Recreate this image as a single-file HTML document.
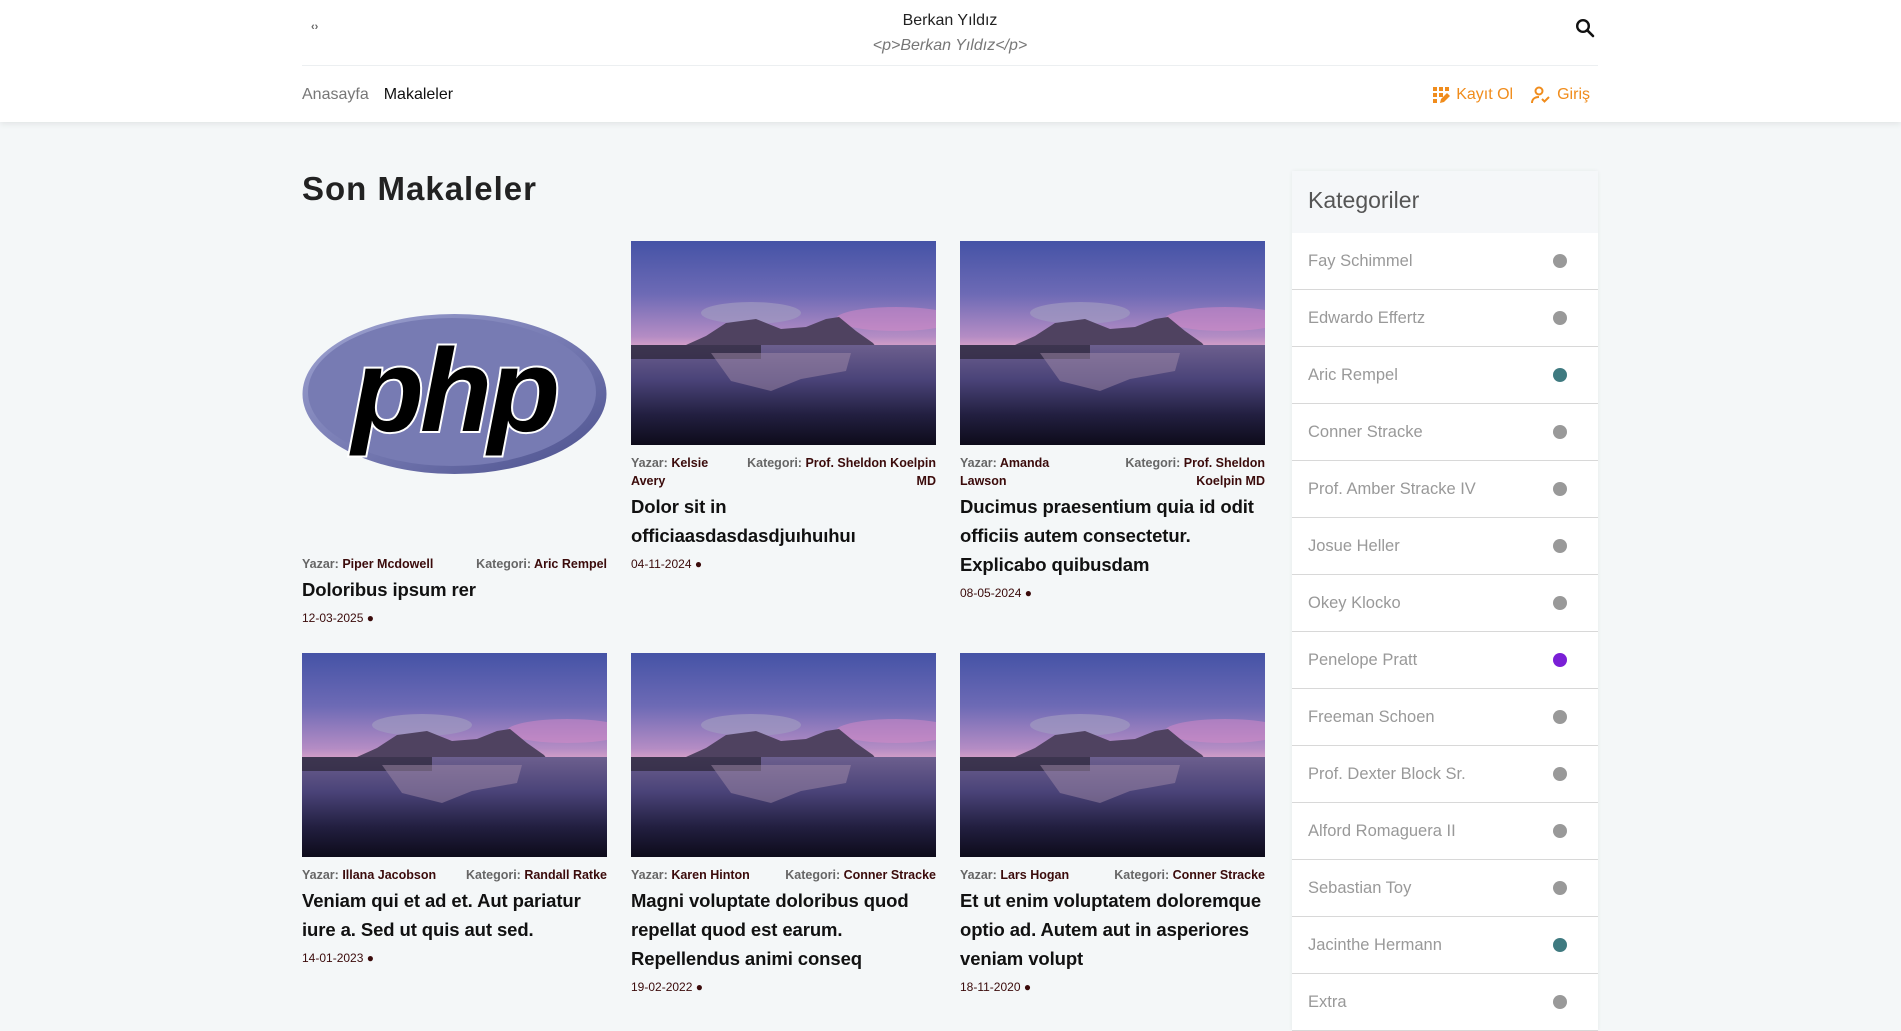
<!DOCTYPE html>
<html><head><meta charset="utf-8">
<style>
*{margin:0;padding:0;box-sizing:border-box}
body{width:1901px;height:989px;overflow:hidden;background:#f4f7f8;font-family:"Liberation Sans",sans-serif;position:relative}
.hdr{position:absolute;left:0;top:0;width:1901px;height:122px;background:#fff;box-shadow:0 2px 6px rgba(0,0,0,.08)}
.top{position:absolute;left:302px;top:0;width:1296px;height:66px;border-bottom:1px solid #eceff1}
.brand{position:absolute;left:0;width:100%;text-align:center;top:12px;font-size:16px;color:#222;line-height:18px}
.brand i{display:block;color:#777;margin-top:7px}
.nav{position:absolute;left:302px;top:86px;font-size:16px;color:#777}
.nav b{font-weight:normal;color:#111;margin-left:15px}
.auth{position:absolute;right:311px;top:86px;font-size:16px;color:#f08c1c;display:flex;gap:18px;align-items:center}
.auth span{display:flex;align-items:center;gap:6px}
h1{position:absolute;left:302px;top:170px;font-size:33px;font-weight:bold;color:#222;letter-spacing:1px}
.grid{position:absolute;left:302px;top:241px;width:965px;display:flex;flex-wrap:wrap;column-gap:24px;row-gap:28px;align-items:flex-start}
.card{width:305px}
.card svg{display:block}
.meta{display:flex;justify-content:space-between;gap:6px;font-size:12.5px;font-weight:bold;line-height:18px;color:#3b0b0b;margin-top:9px}
.meta span em{font-style:normal;color:#666}
.meta span:last-child{text-align:right}
.t{font-size:18.5px;font-weight:bold;line-height:29px;color:#111;margin-top:2px;letter-spacing:-.1px}
.d{font-size:12px;color:#3b0b0b;margin-top:7px}
.side{position:absolute;left:1292px;top:171px;width:306px;background:#fff;box-shadow:0 0 4px rgba(0,0,0,.06)}
.side h2{height:62px;background:#f5f7f9;font-weight:normal;font-size:23px;color:#555;padding:16px 0 0 16px}
.side div{height:57px;border-bottom:1px solid #d8d8d8;font-size:16.5px;color:#999;padding:19px 16px;position:relative}
.side div:after{content:"";position:absolute;left:261px;top:21px;width:14px;height:14px;border-radius:50%;background:var(--c,#999)}
</style></head><body>
<svg width="0" height="0" style="position:absolute">
<defs>
<linearGradient id="sky" x1="0" y1="0" x2="0" y2="1"><stop offset="0" stop-color="#4553a6"/><stop offset=".5" stop-color="#6d6ab5"/><stop offset=".9" stop-color="#b48cc4"/><stop offset="1" stop-color="#d6a0c8"/></linearGradient>
<linearGradient id="wat" x1="0" y1="0" x2="0" y2="1"><stop offset="0" stop-color="#6c5f8e"/><stop offset=".35" stop-color="#4a4378"/><stop offset=".7" stop-color="#221f40"/><stop offset="1" stop-color="#0d0b1a"/></linearGradient>
<symbol id="land" viewBox="0 0 305 204">
<rect width="305" height="106" fill="url(#sky)"/>
<ellipse cx="265" cy="78" rx="60" ry="12" fill="#d88ac8" opacity=".5"/>
<ellipse cx="120" cy="72" rx="50" ry="11" fill="#a09ac0" opacity=".7"/>
<polygon points="55,104 75,95 95,82 125,78 150,88 175,86 195,78 208,76 225,90 242,102 245,106 55,106" fill="#4f4260"/>
<rect y="104" width="305" height="100" fill="url(#wat)"/>
<rect y="104" width="130" height="14" fill="#2a2434" opacity=".7"/>
<polygon points="80,112 220,112 215,130 170,138 140,150 100,140" fill="#a08aa8" opacity=".5"/>
</symbol>
</defs></svg>

<div class="hdr">
 <div class="top">
  <div style="position:absolute;left:9px;top:21px;font-size:11px;color:#666;font-weight:bold">‹›</div>
  <div class="brand">Berkan Yıldız<i>&lt;p&gt;Berkan Yıldız&lt;/p&gt;</i></div>
  <svg style="position:absolute;right:3px;top:18px" width="20" height="20" viewBox="0 0 20 20"><circle cx="8" cy="8" r="5.8" fill="none" stroke="#111" stroke-width="2.4"/><path d="M12.3 12.3 18 18" stroke="#111" stroke-width="2.6" stroke-linecap="round"/></svg>
 </div>
 <div class="nav">Anasayfa<b>Makaleler</b></div>
 <div class="auth">
  <span><svg width="18" height="18" viewBox="0 0 18 18" fill="#f08c1c"><rect x="1" y="1" width="4" height="4"/><rect x="7" y="1" width="4" height="4"/><rect x="13" y="1" width="4" height="4"/><rect x="1" y="7" width="4" height="4"/><rect x="7" y="7" width="4" height="4"/><rect x="1" y="13" width="4" height="4"/><path d="M8 17l1-4 6-6 3 3-6 6z"/></svg>Kayıt Ol</span>
  <span><svg width="20" height="18" viewBox="0 0 20 18" fill="none" stroke="#f08c1c" stroke-width="2"><circle cx="8" cy="5" r="3.5"/><path d="M1 17c0-4 3-6 7-6"/><path d="M11 13l2.5 2.5L18 11"/></svg>Giriş</span>
 </div>
</div>

<h1>Son Makaleler</h1>

<div class="grid">
 <div class="card">
  <svg width="305" height="305" viewBox="0 0 305 305"><defs><linearGradient id="pg" x1="0" y1="0" x2="1" y2="1"><stop offset="0" stop-color="#a0a5d2"/><stop offset=".5" stop-color="#777bb3"/><stop offset="1" stop-color="#4a4f8c"/></linearGradient></defs>
  <ellipse cx="152.5" cy="153" rx="152" ry="80" fill="url(#pg)"/><ellipse cx="150" cy="151" rx="144" ry="74" fill="#777bb3"/>
  <text x="152" y="190" text-anchor="middle" font-family="Liberation Sans" font-weight="bold" font-style="italic" font-size="118" fill="#000" stroke="#fff" stroke-width="4" paint-order="stroke" letter-spacing="-4">php</text></svg>
  <div class="meta"><span><em>Yazar:</em> Piper Mcdowell</span><span><em>Kategori:</em> Aric Rempel</span></div>
  <div class="t">Doloribus ipsum rer</div><div class="d">12-03-2025 ●</div>
 </div>
 <div class="card">
  <svg width="305" height="204"><use href="#land"/></svg>
  <div class="meta"><span><em>Yazar:</em> Kelsie Avery</span><span><em>Kategori:</em> Prof. Sheldon Koelpin MD</span></div>
  <div class="t">Dolor sit in officiaasdasdasdjuıhuıhuı</div><div class="d">04-11-2024 ●</div>
 </div>
 <div class="card">
  <svg width="305" height="204"><use href="#land"/></svg>
  <div class="meta"><span><em>Yazar:</em> Amanda Lawson</span><span><em>Kategori:</em> Prof. Sheldon Koelpin MD</span></div>
  <div class="t">Ducimus praesentium quia id odit officiis autem consectetur. Explicabo quibusdam</div><div class="d">08-05-2024 ●</div>
 </div>
 <div class="card">
  <svg width="305" height="204"><use href="#land"/></svg>
  <div class="meta"><span><em>Yazar:</em> Illana Jacobson</span><span><em>Kategori:</em> Randall Ratke</span></div>
  <div class="t">Veniam qui et ad et. Aut pariatur iure a. Sed ut quis aut sed.</div><div class="d">14-01-2023 ●</div>
 </div>
 <div class="card">
  <svg width="305" height="204"><use href="#land"/></svg>
  <div class="meta"><span><em>Yazar:</em> Karen Hinton</span><span><em>Kategori:</em> Conner Stracke</span></div>
  <div class="t">Magni voluptate doloribus quod repellat quod est earum. Repellendus animi conseq</div><div class="d">19-02-2022 ●</div>
 </div>
 <div class="card">
  <svg width="305" height="204"><use href="#land"/></svg>
  <div class="meta"><span><em>Yazar:</em> Lars Hogan</span><span><em>Kategori:</em> Conner Stracke</span></div>
  <div class="t">Et ut enim voluptatem doloremque optio ad. Autem aut in asperiores veniam volupt</div><div class="d">18-11-2020 ●</div>
 </div>
</div>

<div class="side">
 <h2>Kategoriler</h2>
 <div>Fay Schimmel</div>
 <div>Edwardo Effertz</div>
 <div style="--c:#3f7a80">Aric Rempel</div>
 <div>Conner Stracke</div>
 <div>Prof. Amber Stracke IV</div>
 <div>Josue Heller</div>
 <div>Okey Klocko</div>
 <div style="--c:#7a1fd6">Penelope Pratt</div>
 <div>Freeman Schoen</div>
 <div>Prof. Dexter Block Sr.</div>
 <div>Alford Romaguera II</div>
 <div>Sebastian Toy</div>
 <div style="--c:#3f7a80">Jacinthe Hermann</div>
 <div>Extra</div>
</div>
</body></html>
